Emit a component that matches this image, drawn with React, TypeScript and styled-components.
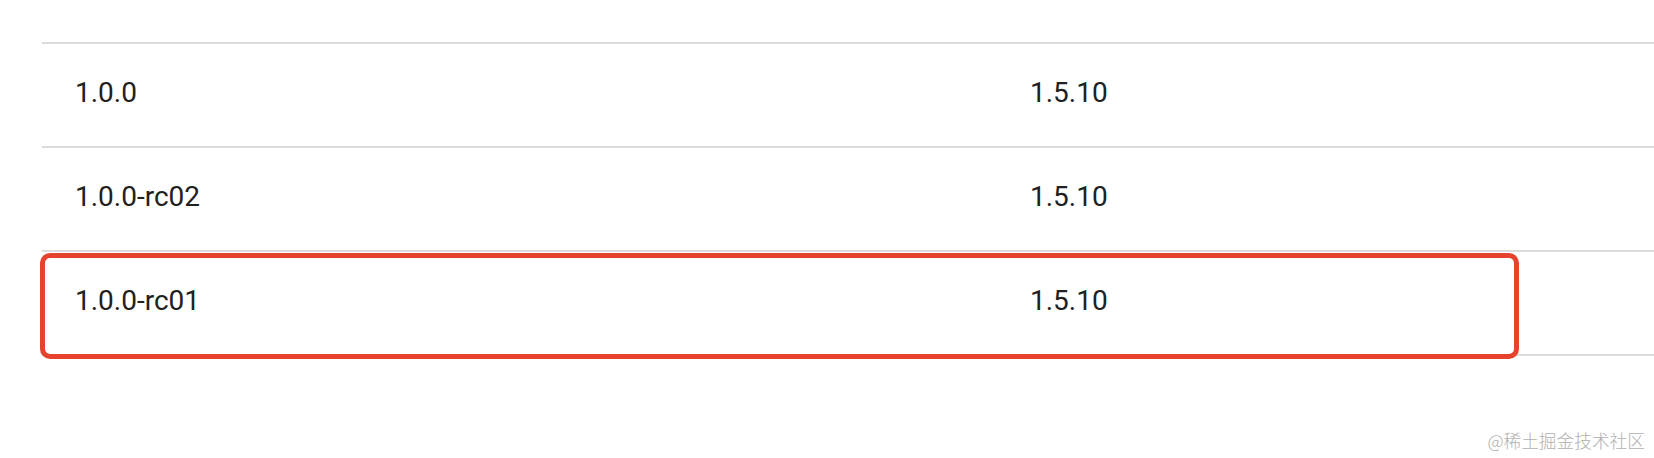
import styled, { createGlobalStyle } from "styled-components";

interface VersionRow {
  version: string;
  compiler: string;
  marked?: boolean;
}

const rows: VersionRow[] = [
  { version: "1.0.0", compiler: "1.5.10" },
  { version: "1.0.0-rc02", compiler: "1.5.10" },
  { version: "1.0.0-rc01", compiler: "1.5.10", marked: true },
];

const GlobalStyle = createGlobalStyle`
  html, body {
    margin: 0;
    padding: 0;
    background: #ffffff;
  }
  body {
    font-family: Roboto, "Liberation Sans", sans-serif;
  }
`;

const App = () => {
  return (
    <Page>
      <GlobalStyle />
      <Table>
        {rows.map((row) => (
          <Row key={row.version}>
            <Cell>{row.version}</Cell>
            <Cell>{row.compiler}</Cell>
            {row.marked && <Highlight />}
          </Row>
        ))}
      </Table>
      <Watermark>@稀土掘金技术社区</Watermark>
    </Page>
  );
};

const Page = styled.div`
  position: relative;
  width: 1654px;
  height: 458px;
  box-sizing: border-box;
  padding: 42px 0 0 42px;
  overflow: hidden;
  background: #ffffff;
`;

const Table = styled.div`
  display: flex;
  flex-direction: column;
  border-bottom: 2px solid #dcdcdc;
`;

const Row = styled.div`
  position: relative;
  display: grid;
  grid-template-columns: 955px 1fr;
  align-items: center;
  height: 102px;
  padding-left: 33px;
  border-top: 2px solid #dcdcdc;
`;

const Cell = styled.div`
  font-size: 28px;
  color: #212121;
  line-height: 1;
  margin-top: -4px;
`;

const Highlight = styled.div`
  position: absolute;
  top: 1px;
  left: -2px;
  width: 1479px;
  height: 106px;
  box-sizing: border-box;
  border: 5px solid #e5432d;
  border-radius: 10px;
  pointer-events: none;
`;

const Watermark = styled.div`
  position: absolute;
  right: 9px;
  bottom: 5px;
  font-family: "Noto Sans CJK SC", sans-serif;
  font-size: 17.7px;
  font-weight: 300;
  color: #b0b0b0;
`;

export default App;
